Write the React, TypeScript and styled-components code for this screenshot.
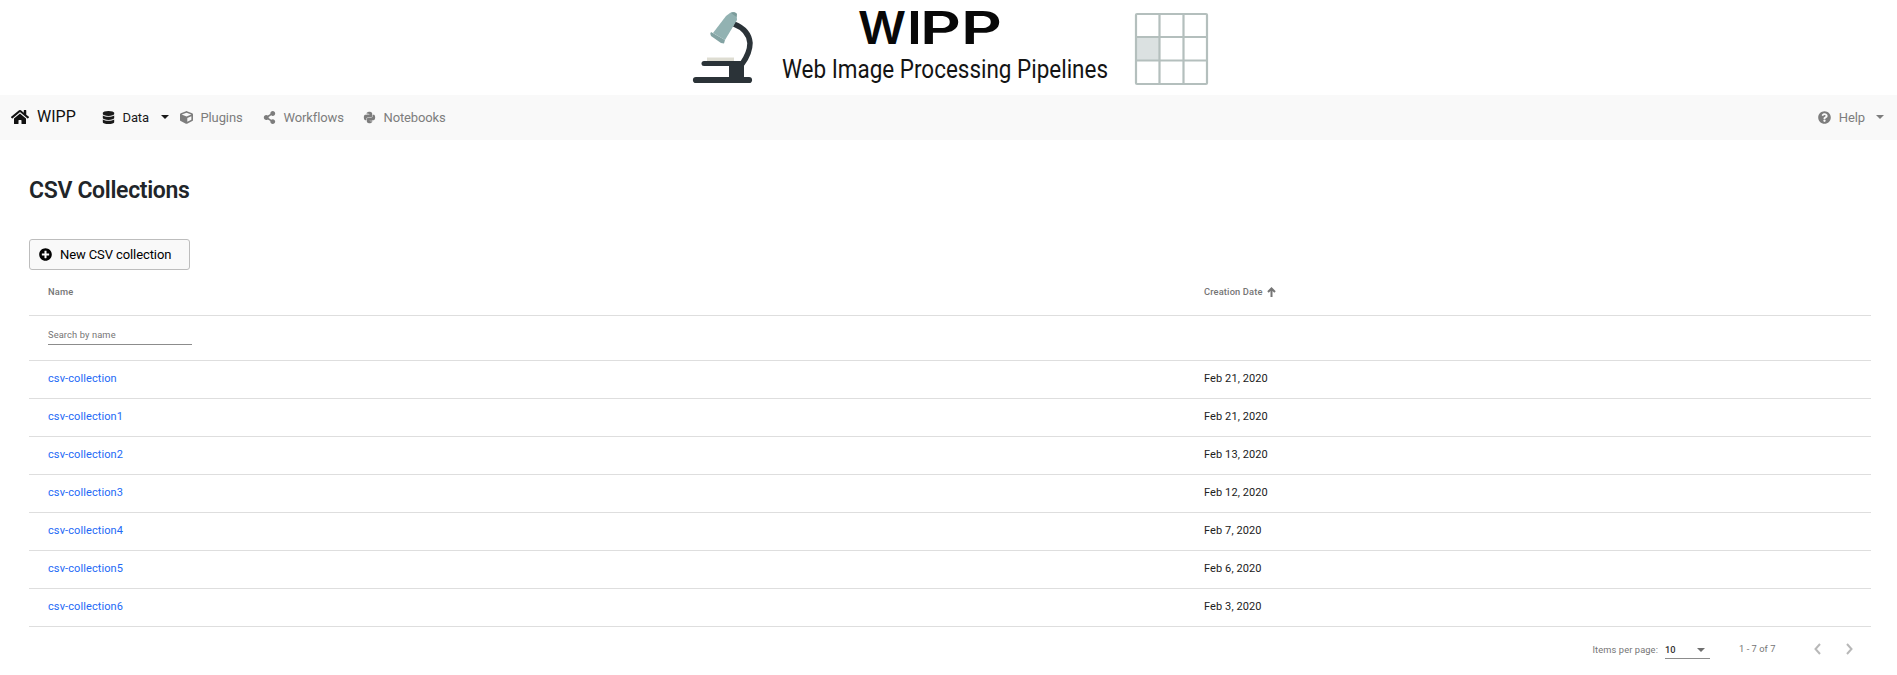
import React from "react";
import styled, { createGlobalStyle } from "styled-components";
import {
  FaHome,
  FaDatabase,
  FaCube,
  FaShareAlt,
  FaPython,
  FaQuestionCircle,
  FaPlusCircle,
} from "react-icons/fa";

const GlobalStyle = createGlobalStyle`
  * { box-sizing: border-box; }
  body {
    margin: 0;
    background: #fff;
    color: #212529;
    font-family: Roboto, "Liberation Sans", sans-serif;
  }
`;

const Banner = styled.header`
  display: flex;
  justify-content: center;
  height: 95px;
`;

const NavBar = styled.nav`
  display: flex;
  align-items: center;
  height: 45px;
  padding: 0 13px 0 11px;
  background: #f9f9f9;
`;

const Brand = styled.a`
  display: flex;
  align-items: center;
  width: 91px;
  margin-top: -1px;
  color: #111;
  font-size: 16px;
  line-height: 20px;
  svg { width: 18px; height: 16px; margin-right: 8px; }
`;

const NavItem = styled.a<{ $active?: boolean; $width?: number }>`
  display: flex;
  align-items: center;
  width: ${(p) => (p.$width ? `${p.$width}px` : "auto")};
  margin-top: 1px;
  color: ${(p) => (p.$active ? "#1a1a1a" : "#7d7d7d")};
  font-size: 13px;
  line-height: 18px;
  letter-spacing: -0.12px;
  svg { width: 13px; height: 13px; margin: -1px 7.500px 0 0; }
`;

const Caret = styled.span<{ $gap: number; $size: number }>`
  margin-left: ${(p) => p.$gap}px;
  margin-top: -2px;
  border: ${(p) => p.$size}px solid transparent;
  border-top-color: currentColor;
  border-bottom: 0;
`;

const Spacer = styled.div`
  flex: 1;
`;

const Main = styled.main`
  padding: 37px 26px 0 29px;
`;

const Title = styled.h1`
  margin: 0;
  height: 62px;
  font-size: 23px;
  font-weight: 600;
  line-height: 28px;
  letter-spacing: -0.33px;
`;

const NewButton = styled.button`
  display: flex;
  align-items: center;
  width: 161px;
  height: 31px;
  padding: 0 10px 0 9px;
  border: 1px solid #bdbdbd;
  border-radius: 3px;
  background: #f9f9f9;
  color: #000;
  font: 400 13px/18px Roboto, "Liberation Sans", sans-serif;
  letter-spacing: -0.1px;
  svg { width: 13px; height: 13px; margin-right: 8px; }
`;

const Row = styled.div<{ $height: number }>`
  display: grid;
  grid-template-columns: 1156px 1fr;
  align-items: center;
  height: ${(p) => p.$height}px;
  padding: 0 0 2px 19px;
  border-bottom: 1px solid #dedede;
  color: #212121;
  font-size: 11px;
  line-height: 14px;
  letter-spacing: 0.1px;
`;

const HeadCell = styled.div`
  display: flex;
  align-items: center;
  color: #757575;
  font-size: 9.3px;
  font-weight: 500;
  letter-spacing: 0.15px;
  svg { margin-left: 4px; }
`;

const Search = styled.input`
  width: 144px;
  height: 19px;
  margin-top: -4px;
  padding: 0;
  border: 0;
  border-bottom: 1px solid #8c8c8c;
  outline: 0;
  background: transparent;
  font: 400 9.3px/14px Roboto, "Liberation Sans", sans-serif;
  letter-spacing: 0.12px;
  &::placeholder { color: #757575; opacity: 1; }
`;

const Link = styled.a`
  color: #2369f6;
`;

const Paginator = styled.footer`
  display: flex;
  justify-content: flex-end;
  align-items: flex-start;
  padding: 15px 18px 0 0;
  color: #757575;
  font-size: 9.3px;
  line-height: 14px;
`;

const PageLabel = styled.span`
  margin: 1px 7px 0 0;
  letter-spacing: 0.1px;
`;

const PageSelect = styled.div`
  display: flex;
  align-items: center;
  justify-content: space-between;
  width: 45px;
  height: 17px;
  padding: 0 5px 1px 0;
  border-bottom: 1px solid #8c8c8c;
  color: #333;
  font-weight: 500;
`;

const SelectArrow = styled.span`
  border: 4px solid transparent;
  border-top-color: #6f6f6f;
  border-bottom: 0;
`;

const Range = styled.span`
  width: 75px;
  margin-left: 29px;
  letter-spacing: 0.05px;
`;

const Chevron = styled.svg`
  width: 7px;
  height: 12px;
  margin-top: 1px;
  & + & { margin-left: 25px; }
`;

const rows = [
  ["csv-collection", "Feb 21, 2020"],
  ["csv-collection1", "Feb 21, 2020"],
  ["csv-collection2", "Feb 13, 2020"],
  ["csv-collection3", "Feb 12, 2020"],
  ["csv-collection4", "Feb 7, 2020"],
  ["csv-collection5", "Feb 6, 2020"],
  ["csv-collection6", "Feb 3, 2020"],
];

const Logo = () => (
  <svg width="521" height="95" viewBox="688 0 521 95" role="img" aria-label="WIPP">
    <path d="M734 24 Q749 30 750 43 Q750 53 742 64" fill="none" stroke="#2b3338" strokeWidth="5.500" />
    <path d="M729 62 H744 V79 H729 Z" fill="#2b3338" />
    <path d="M704 63.500 H741" stroke="#2b3338" strokeWidth="5" strokeLinecap="round" />
    <path d="M696 80 H749" stroke="#2b3338" strokeWidth="6.200" strokeLinecap="round" />
    <path d="M707 57.500 H734 V61 H707 Z" fill="#deddd2" />
    <path d="M730 13 Q733 11 736.5 13.500 L737 20 L725 40 L713 33 L726 16 Z" fill="#92b2b2" />
    <path d="M711 32 L725 40 L724 43.500 L721 43 L711 36 Q709.500 33.500 711 32 Z" fill="#83a3a3" />
    <path d="M731 13 Q735 11 737 14 L736.500 17 Z" fill="#7c9c9b" />
    <text y="44" fontFamily="Inter, sans-serif" fontWeight="600" fontSize="45" fill="#080808">
      <tspan x="858" textLength="48" lengthAdjust="spacingAndGlyphs">W</tspan>
      <tspan x="907" textLength="15" lengthAdjust="spacingAndGlyphs">I</tspan>
      <tspan x="920" textLength="41" lengthAdjust="spacingAndGlyphs">P</tspan>
      <tspan x="961" textLength="41" lengthAdjust="spacingAndGlyphs">P</tspan>
    </text>
    <text
      x="782"
      y="78"
      textLength="326"
      lengthAdjust="spacingAndGlyphs"
      fontFamily="Roboto, sans-serif"
      fontSize="26"
      fill="#141414"
    >
      Web Image Processing Pipelines
    </text>
    <rect x="1137" y="38" width="22" height="22" fill="#dbe1e1" />
    <g fill="none" stroke="#b4bfbd" strokeWidth="2.200">
      <rect x="1136" y="14" width="71" height="70" rx="1" />
      <path d="M1159.500 14 V84 M1183.500 14 V84 M1136 37 H1207 M1136 60.500 H1207" />
    </g>
  </svg>
);

export default function App() {
  return (
    <>
      <GlobalStyle />
      <Banner>
        <Logo />
      </Banner>
      <NavBar>
        <Brand><FaHome />WIPP</Brand>
        <NavItem $active $width={78}><FaDatabase />Data<Caret $gap={12} $size={4} /></NavItem>
        <NavItem $width={83}><FaCube />Plugins</NavItem>
        <NavItem $width={100}><FaShareAlt />Workflows</NavItem>
        <NavItem><FaPython />Notebooks</NavItem>
        <Spacer />
        <NavItem><FaQuestionCircle />Help<Caret $gap={11} $size={4} /></NavItem>
      </NavBar>
      <Main>
        <Title>CSV Collections</Title>
        <NewButton><FaPlusCircle />New CSV collection</NewButton>
        <Row $height={46}>
          <HeadCell>Name</HeadCell>
          <HeadCell>
            Creation Date
            <svg width="9" height="10" viewBox="0 0 9 10">
              <path d="M4.500 10 V1.500 M1 5 L4.500 1.500 L8 5" fill="none" stroke="#757575" strokeWidth="2" />
            </svg>
          </HeadCell>
        </Row>
        <Row $height={45}>
          <Search placeholder="Search by name" />
        </Row>
        {rows.map(([name, date]) => (
          <Row key={name} $height={38}>
            <Link>{name}</Link>
            <span>{date}</span>
          </Row>
        ))}
        <Paginator>
          <PageLabel>Items per page:</PageLabel>
          <PageSelect>10<SelectArrow /></PageSelect>
          <Range>1 - 7 of 7</Range>
          <Chevron viewBox="0 0 7 12">
            <path d="M6 1 L1.500 6 L6 11" fill="none" stroke="#b8b8b8" strokeWidth="2" />
          </Chevron>
          <Chevron viewBox="0 0 7 12">
            <path d="M1 1 L5.500 6 L1 11" fill="none" stroke="#b8b8b8" strokeWidth="2" />
          </Chevron>
        </Paginator>
      </Main>
    </>
  );
}
